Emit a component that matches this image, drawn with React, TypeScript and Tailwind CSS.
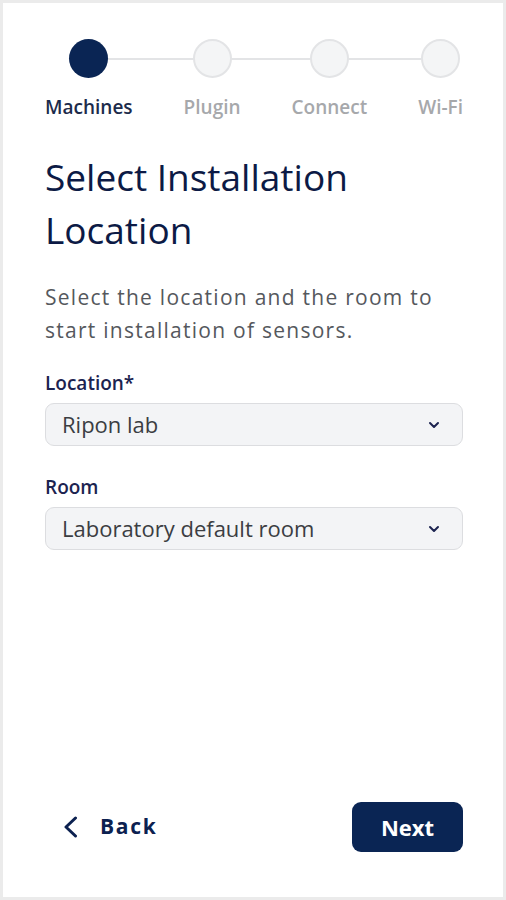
import { ChevronDown } from 'lucide-react'

const steps = ['Machines', 'Plugin', 'Connect', 'Wi-Fi']

function Stepper() {
  return (
    <div className="relative flex justify-between">
      {/* connector line behind the circles */}
      <div className="absolute left-[44px] right-[24px] top-[19px] h-[2px] bg-[#e3e4e6]" />
      {steps.map((s, i) => (
        <div key={s} className="relative flex flex-col items-center">
          <div
            className={
              i === 0
                ? 'h-[39px] w-[39px] rounded-full bg-[#0a2554]'
                : 'h-[39px] w-[39px] rounded-full border-2 border-[#e3e4e6] bg-[#f4f5f6]'
            }
          />
          <span
            className={`mt-[17px] text-[19px] leading-[24px] font-semibold ${
              i === 0 ? 'text-[#1c2b4b]' : 'text-[#a6a8ab]'
            }`}
          >
            {s}
          </span>
        </div>
      ))}
    </div>
  )
}

function Select({ label, value }: { label: string; value: string }) {
  return (
    <div>
      <label className="block text-[19px] leading-[24px] font-semibold text-[#1c2350] mb-[8px]">{label}</label>
      <div className="flex h-[43px] items-center justify-between rounded-[9px] border border-[#dcdde0] bg-[#f3f4f6] pl-[16px] pr-[20px]">
        <span className="text-[22px] text-[#3b3d42]">{value}</span>
        <ChevronDown className="h-[16px] w-[16px] text-[#1c2350]" strokeWidth={3} />
      </div>
    </div>
  )
}

export default function App() {
  return (
    <div
      className="flex h-[900px] flex-col border-[3px] border-[#ebebeb] bg-white pl-[42px] pr-[40px] pt-[36px] pb-[45px]"
      style={{ fontFamily: '"Open Sans", "Noto Sans", sans-serif' }}
    >
      <Stepper />

      <h1 className="mt-[31px] text-[37px] leading-[53px] font-normal text-[#0c1a45]">
        Select Installation
        <br />
        Location
      </h1>

      <p className="mt-[25px] text-[21px] leading-[33px] tracking-[0.06em] text-[#55585d]">
        Select the location and the room to start installation of sensors.
      </p>

      <div className="mt-[24px] flex flex-col gap-[29px]">
        <Select label="Location*" value="Ripon lab" />
        <Select label="Room" value="Laboratory default room" />
      </div>

      <div className="mt-auto flex items-center justify-between">
        <button type="button" className="flex items-center gap-[22px] pl-[18px] text-[#0c2150]">
          <svg width="15" height="22" viewBox="0 0 15 22" fill="none">
            <path d="M12.5 2 L3 11 L12.5 20" stroke="currentColor" strokeWidth="3" strokeLinecap="round" strokeLinejoin="round" />
          </svg>
          <span className="text-[21px] font-bold tracking-[0.08em]">Back</span>
        </button>
        <button
          type="button"
          className="h-[50px] w-[111px] rounded-[9px] bg-[#0a2554] text-[22px] font-bold text-white"
        >
          Next
        </button>
      </div>
    </div>
  )
}
